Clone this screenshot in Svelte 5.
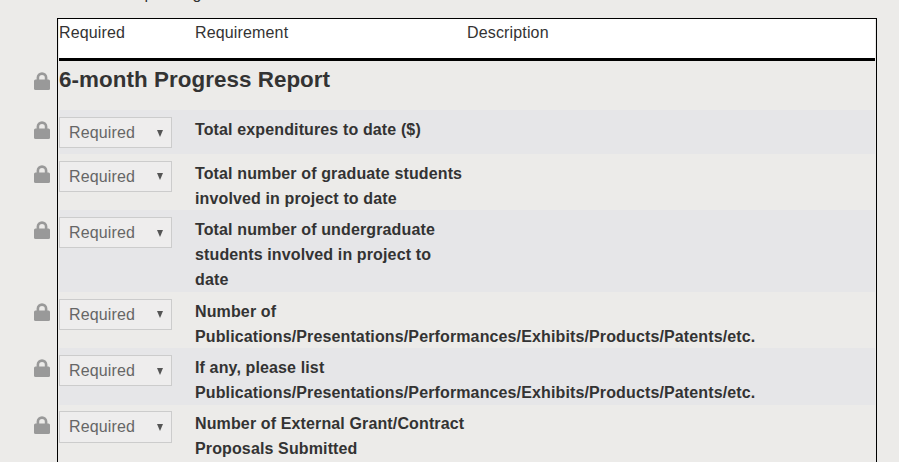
<script>
  const rows = [
    { lines: ['Total expenditures to date ($)'], shade: true, h: 43.75 },
    { lines: ['Total number of graduate students', 'involved in project to date'], shade: false, h: 56.25 },
    { lines: ['Total number of undergraduate', 'students involved in project to', 'date'], shade: true, h: 81.5 },
    { lines: ['Number of', 'Publications/Presentations/Performances/Exhibits/Products/Patents/etc.'], shade: false, h: 56.5 },
    { lines: ['If any, please list', 'Publications/Presentations/Performances/Exhibits/Products/Patents/etc.'], shade: true, h: 56.25 },
    { lines: ['Number of External Grant/Contract', 'Proposals Submitted'], shade: false, h: 57 }
  ];
</script>

{#snippet lock()}
  <svg class="lock" viewBox="0 0 16 18" width="16" height="18" aria-hidden="true">
    <path d="M2.6 8V5.6a5.4 5.4 0 0 1 10.8 0V8h-2.6V5.8a2.8 2.8 0 0 0-5.6 0V8z" fill="#999" />
    <rect x="0" y="7.5" width="16" height="10.5" rx="1.5" fill="#999" />
  </svg>
{/snippet}

<div class="page">
  <p class="cut">Items pending</p>
  <div class="table">
    <div class="head">
      <span class="c-req">Required</span>
      <span class="c-name">Requirement</span>
      <span class="c-desc">Description</span>
    </div>
    <div class="section">
      {@render lock()}
      <h2>6-month Progress Report</h2>
    </div>
    {#each rows as row}
      <div class="row" class:shade={row.shade} style="height: {row.h}px">
        {@render lock()}
        <div class="select"><span>Required</span><i></i></div>
        <div class="name">
          {#each row.lines as line}
            <div>{line}</div>
          {/each}
        </div>
      </div>
    {/each}
  </div>
</div>

<style>
  :global(body) {
    margin: 0;
    background: #ecebe9;
    overflow: hidden;
  }

  .page {
    height: 462px;
    overflow: hidden;
    font-family: "Liberation Sans", Arial, sans-serif;
    font-size: 16px;
    color: #333;
  }

  .cut {
    margin: -15px 0 15px;
    height: 18px;
    line-height: 18px;
    padding-left: 101px;
  }

  .table {
    margin-left: 57px;
    width: 816px;
    border: 1px solid #000;
    border-bottom: 0;
    padding: 0 1px;
  }

  .head {
    display: flex;
    height: 39px;
    background: #fff;
    border-bottom: 3px solid #000;
    line-height: 28px;
    letter-spacing: 0.15px;
  }

  .c-req {
    width: 136px;
  }

  .c-name {
    width: 272px;
  }

  .section {
    display: flex;
    align-items: flex-start;
    height: 49.25px;
  }

  .section h2 {
    margin: 0;
    font-size: 22.4px;
    line-height: 38px;
    font-weight: bold;
    color: #333;
    letter-spacing: 0.05px;
  }

  .lock {
    flex: none;
    margin: 11px 9px 0 -25px;
  }

  .row {
    display: flex;
    align-items: flex-start;
  }

  .shade {
    background: #e6e6e8;
  }

  .select {
    flex: none;
    box-sizing: border-box;
    width: 113px;
    height: 31.25px;
    margin-top: 6.75px;
    padding: 1px 8px 0 9px;
    display: flex;
    align-items: center;
    justify-content: space-between;
    border: 1px solid #ccc;
    background: #eeeded;
    color: #666;
    letter-spacing: 0.15px;
  }

  .select i {
    width: 0;
    height: 0;
    border-left: 3.5px solid transparent;
    border-right: 3.5px solid transparent;
    border-top: 7px solid #555;
  }

  .name {
    margin-left: 23px;
    margin-top: 6.75px;
    font-weight: bold;
    line-height: 25px;
    letter-spacing: 0.13px;
  }
</style>
